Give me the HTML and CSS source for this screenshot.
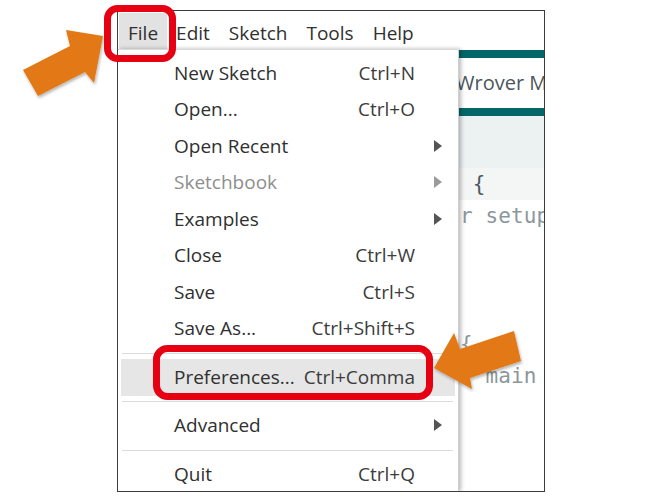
FILE: index.html
```html
<!DOCTYPE html>
<html>
<head>
<meta charset="utf-8">
<link rel="stylesheet" href="styles.css">
</head>
<body>
<div class="page">
  <div class="frame">
    <div class="menubar">
      <span class="mb-item mb-active">File</span>
      <span class="mb-item">Edit</span>
      <span class="mb-item">Sketch</span>
      <span class="mb-item">Tools</span>
      <span class="mb-item">Help</span>
    </div>
    <div class="body">
      <div class="dropdown">
        <div class="item"><span class="label">New Sketch</span><span class="key">Ctrl+N</span><span class="sub"></span></div>
        <div class="item"><span class="label">Open...</span><span class="key">Ctrl+O</span><span class="sub"></span></div>
        <div class="item"><span class="label">Open Recent</span><span class="key"></span><span class="sub"><i class="tri"></i></span></div>
        <div class="item disabled"><span class="label">Sketchbook</span><span class="key"></span><span class="sub"><i class="tri"></i></span></div>
        <div class="item"><span class="label">Examples</span><span class="key"></span><span class="sub"><i class="tri"></i></span></div>
        <div class="item"><span class="label">Close</span><span class="key">Ctrl+W</span><span class="sub"></span></div>
        <div class="item"><span class="label">Save</span><span class="key">Ctrl+S</span><span class="sub"></span></div>
        <div class="item"><span class="label">Save As...</span><span class="key">Ctrl+Shift+S</span><span class="sub"></span></div>
        <div class="sep"></div>
        <div class="item active"><span class="label">Preferences...</span><span class="key">Ctrl+Comma</span><span class="sub"></span></div>
        <div class="sep"></div>
        <div class="item"><span class="label">Advanced</span><span class="key"></span><span class="sub"><i class="tri"></i></span></div>
        <div class="sep"></div>
        <div class="item"><span class="label">Quit</span><span class="key">Ctrl+Q</span><span class="sub"></span></div>
      </div>
      <div class="pane">
        <div class="teal top"></div>
        <div class="tab"><span class="tab-text">Wrover Module</span></div>
        <div class="teal"></div>
        <div class="toolbar"></div>
        <div class="editor">
          <div class="code">
            <div class="line current">void setup() {</div>
            <div class="line">  // put your setup code here, to run once:</div>
            <div class="line"> </div>
            <div class="line">}</div>
            <div class="line"> </div>
            <div class="line">void loop() {</div>
            <div class="line">  // put your main code here, to run repeatedly:</div>
            <div class="line"> </div>
          </div>
        </div>
      </div>
    </div>
  </div>
  <svg class="annot" width="648" height="503" viewBox="0 0 648 503">
    <defs>
      <filter id="sh" x="-20%" y="-20%" width="140%" height="140%">
        <feDropShadow dx="1" dy="2" stdDeviation="1.5" flood-color="#000" flood-opacity="0.3"/>
      </filter>
    </defs>
    <polygon filter="url(#sh)" fill="#e37812" points="23,70 70,46 66,30 103,36 94,83 85,72 38,96"/>
    <polygon filter="url(#sh)" fill="#e37812" points="434,368 454,333 460,349 514,331 521,361 470,378 472,389"/>
    <rect x="107.5" y="8.5" width="65" height="50" rx="10" fill="none" stroke="#e60012" stroke-width="7"/>
    <rect x="156.5" y="348.5" width="273" height="48" rx="11" fill="none" stroke="#e60012" stroke-width="7"/>
  </svg>
</div>
</body>
</html>
```
FILE: styles.css
```css
* { box-sizing: border-box; }
html, body { margin: 0; padding: 0; background: #fff; }
.page {
  position: relative;
  width: 648px;
  height: 503px;
  overflow: hidden;
  padding: 10px 0 0 117px;
}
.frame {
  width: 428px;
  height: 482px;
  border: 1px solid #3c3c3c;
  overflow: hidden;
  display: flex;
  flex-direction: column;
  font-family: "Open Sans", "Noto Sans", sans-serif;
  color: #303030;
}
.menubar {
  height: 38px;
  flex: none;
  display: flex;
  align-items: stretch;
  padding: 2px 0 0 1px;
  font-size: 19px;
}
.mb-item {
  display: flex;
  align-items: center;
  padding: 3px 10px 0 9px;
}
.mb-active { background: #e2e2e2; padding-right: 9px; }
.body {
  flex: 1;
  display: flex;
  min-height: 0;
}
.dropdown {
  width: 341px;
  flex: none;
  border-top: 1px solid #dadada;
  border-right: 1px solid #cfcfcf;
  box-shadow: 2px 0 4px rgba(0,0,0,0.28);
  padding-top: 5px;
  font-size: 19px;
  position: relative;
  z-index: 1;
  background: #fff;
}
.item {
  height: 36.5px;
  margin: 0 3px;
  display: flex;
  align-items: center;
  padding-left: 53px;
  padding-bottom: 1px;
}
.item .label { flex: 1; }
.item .key { color: #3c3c3c; }
.item .sub { width: 40px; flex: none; padding-left: 19px; display: flex; align-items: center; }
.tri {
  display: block;
  width: 0; height: 0;
  border-top: 6px solid transparent;
  border-bottom: 6px solid transparent;
  border-left: 8px solid #555;
}
.item.disabled { color: #8e8e8e; }
.item.disabled .tri { border-left-color: #9a9a9a; }
.item.active { background: #e6e6e6; }
.sep {
  height: 12px;
  margin: 0 5px 0 4px;
  display: flex;
  align-items: center;
}
.sep::before {
  content: "";
  display: block;
  width: 100%;
  height: 1px;
  background: #dcdcdc;
}
.pane {
  flex: 1;
  min-width: 0;
  overflow: hidden;
  display: flex;
  flex-direction: column;
  background: #fff;
}
.teal { height: 8px; background: #03676a; flex: none; }
.teal.top { margin-top: 1px; }
.tab {
  height: 50px;
  flex: none;
  display: flex;
  align-items: center;
  white-space: nowrap;
  padding-bottom: 2px;
}
.tab-text {
  margin-left: -3px;
  font-size: 20px;
  color: #4a565c;
}
.toolbar { height: 52px; background: #ecf1f1; flex: none; }
.editor { flex: 1; overflow: hidden; }
.code {
  margin-left: -152px;
  font-family: "DejaVu Sans Mono", monospace;
  font-size: 21px;
  letter-spacing: 0.1px;
  color: #8b979b;
}
.line { height: 32px; line-height: 32px; white-space: pre; }
.line.current { background: #f4f6f6; color: #4e5b61; }
.annot {
  position: absolute;
  left: 0;
  top: 0;
  z-index: 5;
  pointer-events: none;
}
```
